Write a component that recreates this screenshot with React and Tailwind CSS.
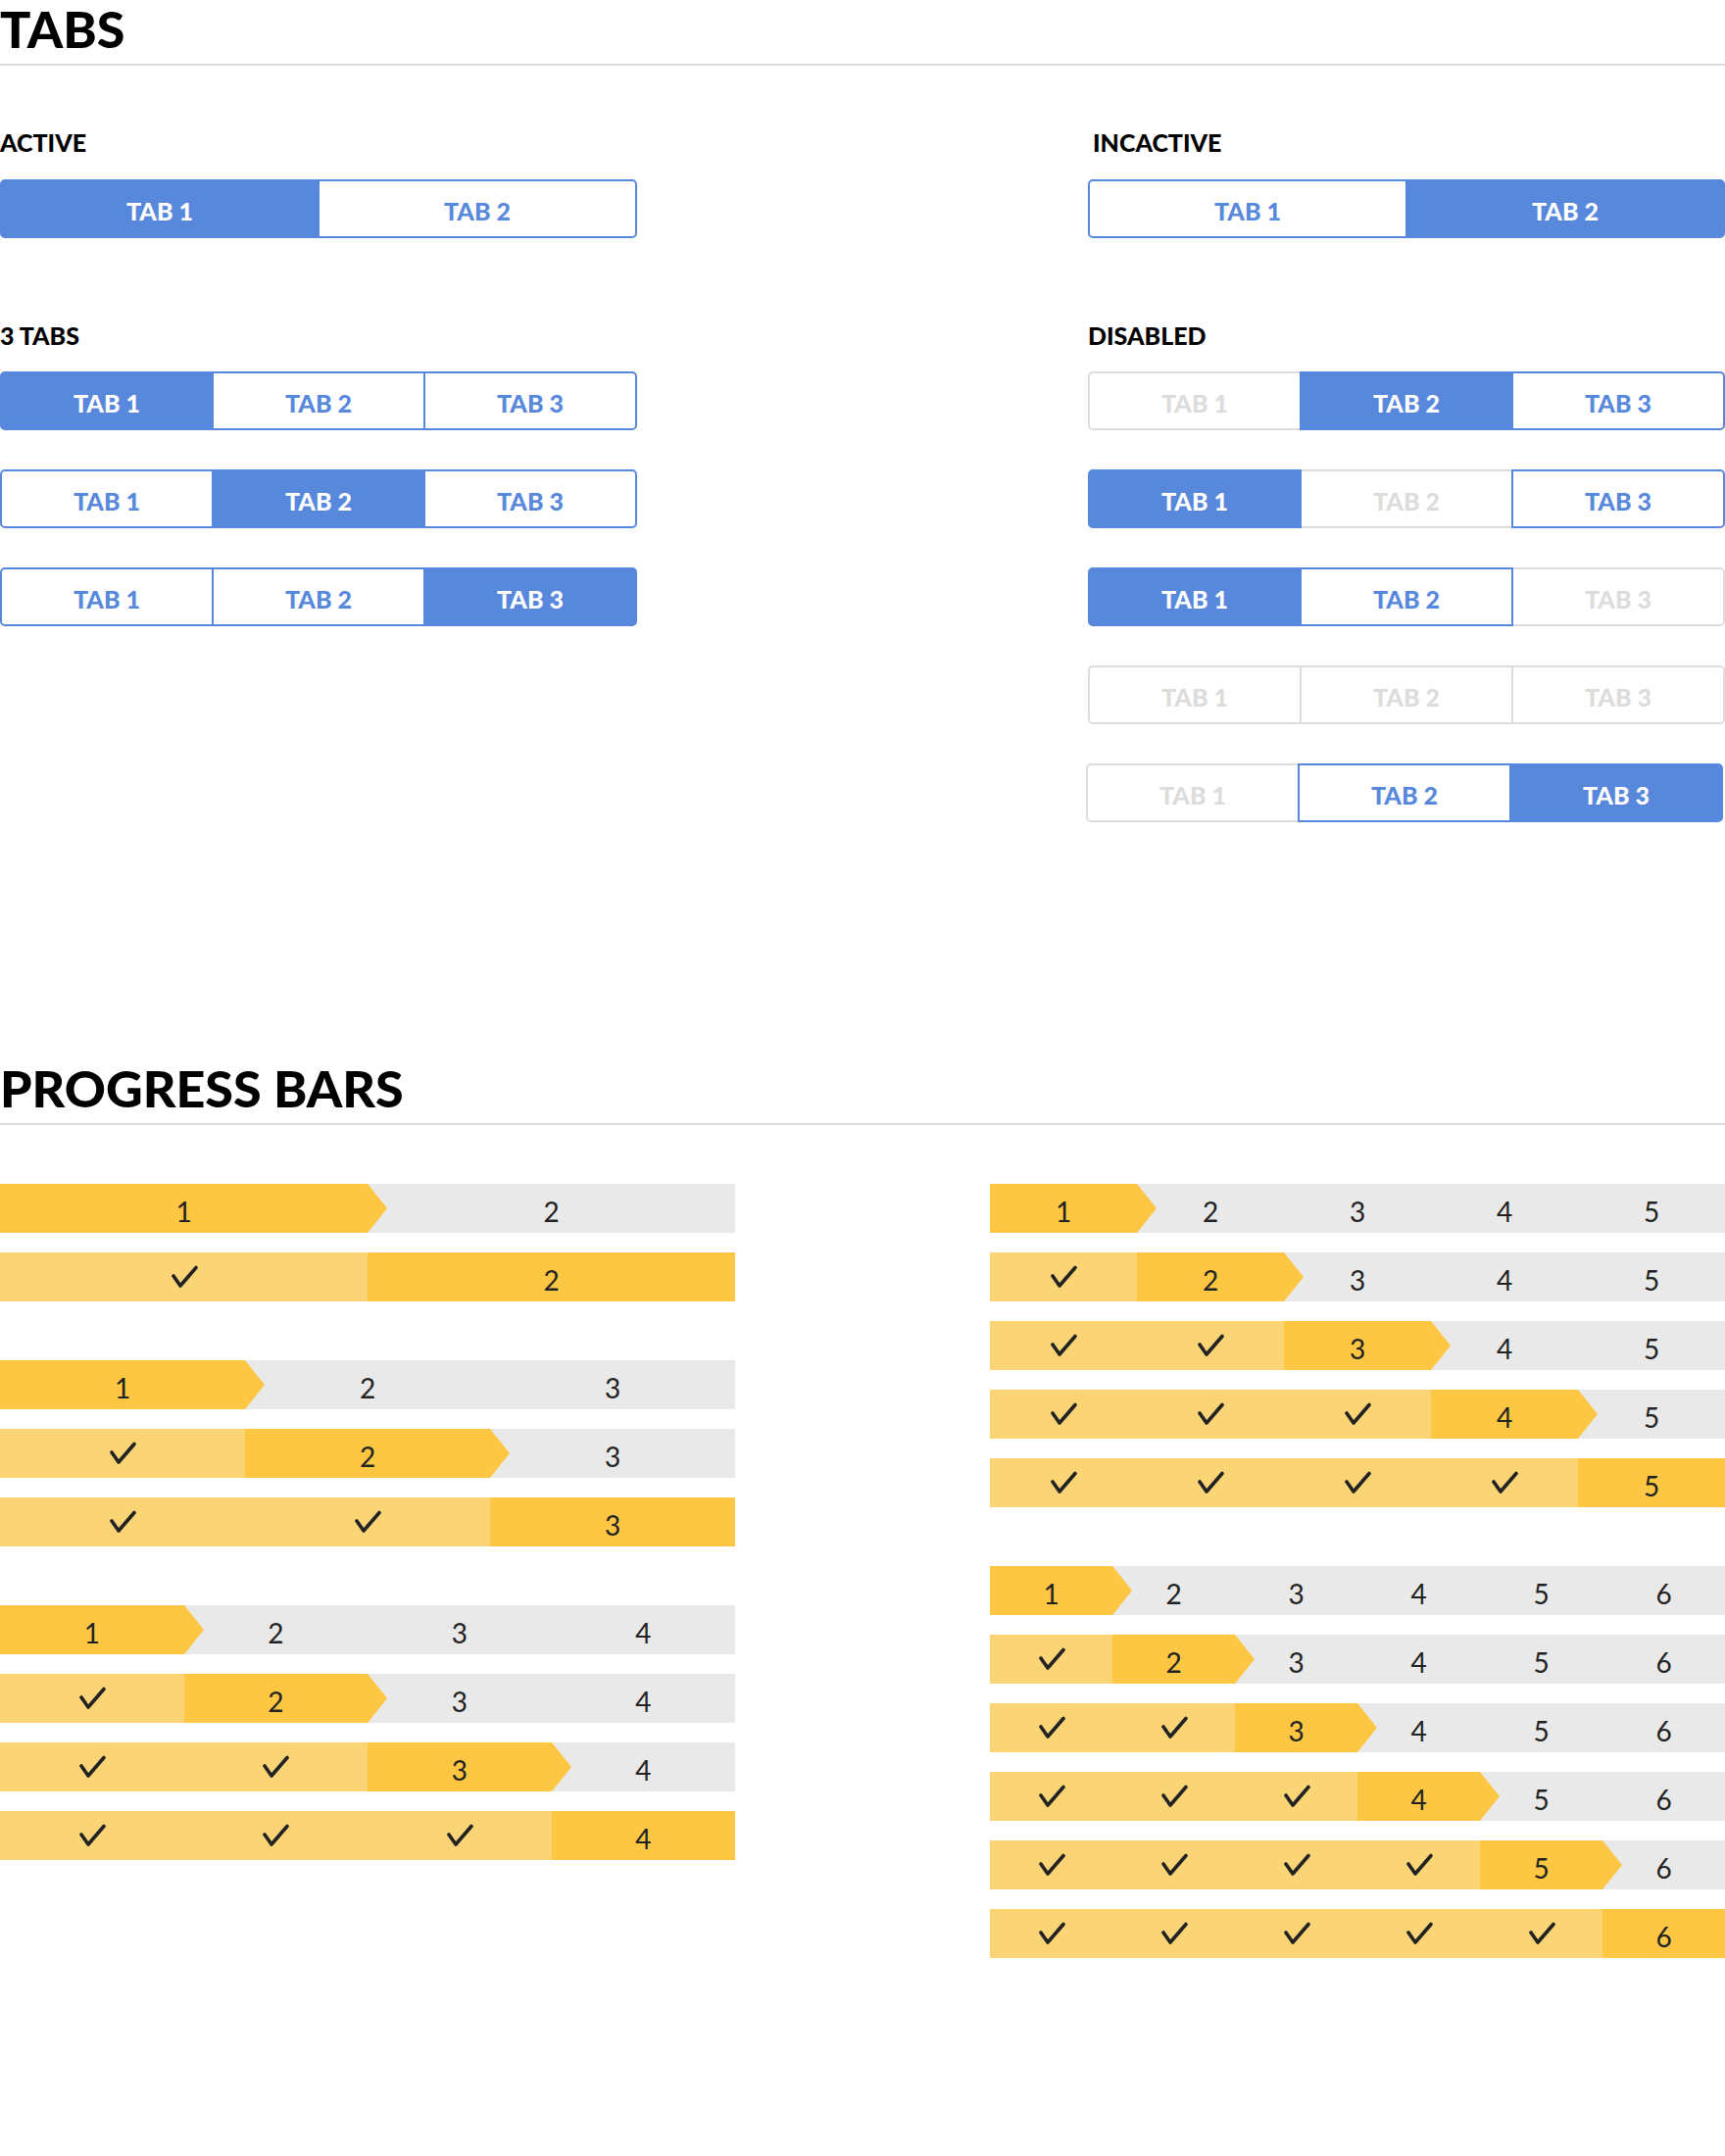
import React from 'react';
import clsx from 'clsx';

// tab states: 'on' = selected, 'idle' = selectable, 'off' = disabled
const TAB_LOOK = {
  on: 'relative z-20 border-[#5888db] bg-[#5888db] text-white',
  idle: 'relative z-10 border-[#5888db] bg-white text-[#5888db]',
  off: 'border-[#dddddd] bg-white text-[#dcdcdc]',
};

function TabGroup({ states, className }) {
  return (
    <div className={clsx('flex w-[650px]', className)}>
      {states.map((s, i) => (
        <div
          key={i}
          className={clsx(
            'flex h-[60px] flex-1 items-center justify-center border-2 pt-[5px] text-[25px] font-black leading-none',
            TAB_LOOK[s],
            i > 0 && '-ml-[2px]',
            i === 0 && 'rounded-l-[5px]',
            i === states.length - 1 && 'rounded-r-[5px]'
          )}
        >
          TAB {i + 1}
        </div>
      ))}
    </div>
  );
}

function Label({ children, className }) {
  return <div className={clsx('text-[25px] font-black leading-[22px]', className)}>{children}</div>;
}

function SectionTitle({ children }) {
  return (
    <h1 className="border-b-2 border-[#dddddd] pt-[5px] pb-[12px] text-[52px] font-black leading-[48px]">
      {children}
    </h1>
  );
}

function Check() {
  return (
    <svg width="30" height="24" viewBox="0 0 30 24" fill="none">
      <path d="M4 11 L11 21 L27 2.5" stroke="#222222" strokeWidth="3.6" strokeLinecap="round" strokeLinejoin="round" />
    </svg>
  );
}

// one stepper row; current is the 0-based active step
function Steps({ count, current }) {
  return (
    <div className="flex h-[50px] w-[750px]">
      {Array.from({ length: count }, (_, i) => {
        const done = i < current;
        const now = i === current;
        return (
          <div
            key={i}
            className={clsx(
              'relative flex flex-1 items-center justify-center',
              done && 'bg-[#fbd575]',
              now && 'bg-[#fdc743]',
              !done && !now && 'bg-[#e9e9e9]'
            )}
          >
            {done ? (
              <Check />
            ) : (
              <span className="pt-[6px] text-[28px] leading-none text-[#222222]">{i + 1}</span>
            )}
            {now && i < count - 1 && (
              <svg className="absolute top-0 left-full z-10" width="20" height="50" viewBox="0 0 20 50">
                <polygon points="0,0 20,25 0,50" fill="#fdc743" />
              </svg>
            )}
          </div>
        );
      })}
    </div>
  );
}

function StepGroup({ count }) {
  return (
    <div className="flex flex-col gap-[20px]">
      {Array.from({ length: count }, (_, i) => (
        <Steps key={i} count={count} current={i} />
      ))}
    </div>
  );
}

export default function App() {
  return (
    <div className="min-h-[2200px] w-[1760px] bg-white font-['Lato','Open_Sans',sans-serif] text-black">
      <SectionTitle>TABS</SectionTitle>

      <div className="mt-[67px] flex gap-[460px]">
        <div className="w-[650px]">
          <Label className="mb-[27px]">ACTIVE</Label>
          <TabGroup states={['on', 'idle']} />

          <Label className="mt-[88px] mb-[26px]">3 TABS</Label>
          <div className="flex flex-col gap-[40px]">
            <TabGroup states={['on', 'idle', 'idle']} />
            <TabGroup states={['idle', 'on', 'idle']} />
            <TabGroup states={['idle', 'idle', 'on']} />
          </div>
        </div>

        <div className="w-[650px]">
          <Label className="mb-[27px] pl-[5px]">INCACTIVE</Label>
          <TabGroup states={['idle', 'on']} />

          <Label className="mt-[88px] mb-[26px]">DISABLED</Label>
          <div className="flex flex-col gap-[40px]">
            <TabGroup states={['off', 'on', 'idle']} />
            <TabGroup states={['on', 'off', 'idle']} />
            <TabGroup states={['on', 'idle', 'off']} />
            <TabGroup states={['off', 'off', 'off']} />
            <TabGroup states={['off', 'idle', 'on']} className="-ml-[2px]" />
          </div>
        </div>
      </div>

      <div className="mt-[242px]">
        <SectionTitle>PROGRESS BARS</SectionTitle>
      </div>

      <div className="mt-[60px] flex gap-[260px]">
        <div className="flex w-[750px] flex-col gap-[60px]">
          <StepGroup count={2} />
          <StepGroup count={3} />
          <StepGroup count={4} />
        </div>
        <div className="flex w-[750px] flex-col gap-[60px]">
          <StepGroup count={5} />
          <StepGroup count={6} />
        </div>
      </div>
    </div>
  );
}
